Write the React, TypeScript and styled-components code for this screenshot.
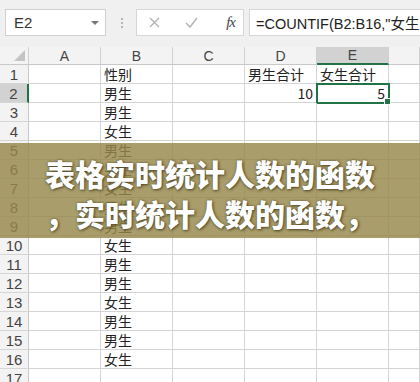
import React from 'react';
import styled, { createGlobalStyle } from 'styled-components';

const GlobalStyle = createGlobalStyle`
  html, body {
    margin: 0;
    padding: 0;
    background: #ffffff;
    font-family: "Noto Sans CJK SC", "Noto Sans", sans-serif;
  }
`;

const Page = styled.div`
  position: relative;
  width: 420px;
  height: 382px;
  overflow: hidden;
  background: #ffffff;
`;

const Toolbar = styled.div`
  display: flex;
  align-items: center;
  height: 47px;
  padding: 0 0 2px 5px;
  box-sizing: border-box;
  background: #f0f0f0;
`;

const NameBox = styled.div`
  display: flex;
  align-items: center;
  justify-content: space-between;
  width: 101px;
  height: 27px;
  box-sizing: border-box;
  padding: 0 6px 0 8px;
  background: #ffffff;
  border: 1px solid #cfcfcf;
  font-family: "Liberation Sans", sans-serif;
  font-size: 15px;
  color: #333;
`;

const Caret = styled.span`
  width: 0;
  height: 0;
  border-left: 4px solid transparent;
  border-right: 4px solid transparent;
  border-top: 4px solid #777;
`;

const Grip = styled.div`
  display: flex;
  flex-direction: column;
  gap: 2px;
  margin: 0 13px 0 15px;
  span {
    width: 2px;
    height: 2px;
    background: #b5b5b5;
  }
`;

const ActionBox = styled.div`
  display: flex;
  align-items: center;
  width: 108px;
  height: 27px;
  box-sizing: border-box;
  padding: 0 8px 0 12px;
  background: #ffffff;
  border: 1px solid #d6d6d6;
  gap: 0;
`;

const ActionIcon = styled.span<{ $w: number }>`
  display: flex;
  align-items: center;
  width: ${p => p.$w}px;
`;

const Fx = styled.span`
  font-family: "Liberation Serif", serif;
  font-style: italic;
  font-size: 15px;
  color: #444;
  margin-left: auto;
  letter-spacing: -1px;
`;

const FormulaBox = styled.div`
  display: flex;
  align-items: center;
  flex: 1;
  height: 27px;
  margin-left: 5px;
  padding-left: 6px;
  box-sizing: border-box;
  background: #ffffff;
  border: 1px solid #d6d6d6;
  border-right: none;
  font-family: "Liberation Sans", "Noto Sans CJK SC", sans-serif;
  font-size: 14.5px;
  color: #222;
  white-space: nowrap;
  overflow: hidden;
`;

const Sheet = styled.div`
  display: grid;
  grid-template-columns: 29px repeat(5, 72px) 1fr;
  grid-auto-rows: 19px;
  grid-template-rows: 18px;
`;

const ColHead = styled.div<{ $active?: boolean }>`
  display: flex;
  align-items: center;
  justify-content: center;
  box-sizing: border-box;
  background: ${p => (p.$active ? '#d2d2d2' : '#f3f3f3')};
  border-right: 1px solid #d0d0d0;
  border-bottom: ${p => (p.$active ? '2px solid #217346' : '1px solid #c8c8c8')};
  font-family: "Liberation Sans", sans-serif;
  font-size: 14px;
  color: #444;
`;

const Corner = styled(ColHead)`
  position: relative;
  &::after {
    content: '';
    position: absolute;
    right: 3px;
    bottom: 3px;
    width: 0;
    height: 0;
    border-left: 11px solid transparent;
    border-bottom: 11px solid #c4c4c4;
  }
`;

const RowHead = styled.div<{ $active?: boolean }>`
  display: flex;
  align-items: center;
  justify-content: center;
  box-sizing: border-box;
  background: ${p => (p.$active ? '#d2d2d2' : '#f3f3f3')};
  border-right: ${p => (p.$active ? '2px solid #217346' : '1px solid #c8c8c8')};
  border-bottom: 1px solid #d6d6d6;
  font-family: "Liberation Sans", sans-serif;
  font-size: 15px;
  color: #444;
`;

const Cell = styled.div<{ $align?: 'left' | 'right'; $selected?: boolean }>`
  position: relative;
  display: flex;
  align-items: center;
  justify-content: ${p => (p.$align === 'right' ? 'flex-end' : 'flex-start')};
  box-sizing: border-box;
  padding: 0 3px;
  border-right: 1px solid #d4d4d4;
  border-bottom: 1px solid #d4d4d4;
  font-size: 14px;
  color: #222;
  white-space: nowrap;
  ${p =>
    p.$selected &&
    `
    outline: 2px solid #217346;
    outline-offset: -1px;
    &::after {
      content: '';
      position: absolute;
      right: -3px;
      bottom: -3px;
      width: 5px;
      height: 5px;
      background: #217346;
      border: 1px solid #fff;
      z-index: 2;
    }
  `}
`;

const Banner = styled.div`
  position: absolute;
  left: 0;
  right: 0;
  top: 143px;
  height: 95px;
  display: flex;
  flex-direction: column;
  align-items: center;
  justify-content: center;
  padding-top: 4px;
  box-sizing: border-box;
  background: rgba(150, 135, 75, 0.82);
  color: #ffffff;
  font-family: "Noto Sans CJK SC", sans-serif;
  font-weight: 900;
  font-size: 30px;
  line-height: 40px;
  text-shadow: 1px 1px 3px rgba(50, 40, 10, 0.7), 0 0 2px rgba(50, 40, 10, 0.5);
  z-index: 3;
`;

const genders = ['男', '男', '女', '男', '男', '女', '男', '男', '女', '男', '男', '女', '男', '男', '女'];
const cols = ['A', 'B', 'C', 'D', 'E'];

type Row = Record<string, { text: string; align?: 'left' | 'right'; selected?: boolean }>;

const rows: Row[] = [];
rows.push({ B: { text: '性别' }, D: { text: '男生合计' }, E: { text: '女生合计' } });
genders.forEach((g, i) => {
  const r: Row = { B: { text: g + '生' } };
  if (i === 0) {
    r.D = { text: '10', align: 'right' };
    r.E = { text: '5', align: 'right', selected: true };
  }
  rows.push(r);
});
rows.push({});

const App: React.FC = () => (
  <Page>
    <GlobalStyle />
    <Toolbar>
      <NameBox>
        E2
        <Caret />
      </NameBox>
      <Grip>
        <span />
        <span />
        <span />
      </Grip>
      <ActionBox>
        <ActionIcon $w={36}>
          <svg width="11" height="11" viewBox="0 0 11 11">
            <path d="M1 1L10 10M10 1L1 10" stroke="#b0b0b0" strokeWidth="1.3" fill="none" />
          </svg>
        </ActionIcon>
        <ActionIcon $w={36}>
          <svg width="13" height="11" viewBox="0 0 13 11">
            <path d="M1 6L5 10L12 1" stroke="#b0b0b0" strokeWidth="1.4" fill="none" />
          </svg>
        </ActionIcon>
        <Fx>fx</Fx>
      </ActionBox>
      <FormulaBox>=COUNTIF(B2:B16,"女生")</FormulaBox>
    </Toolbar>
    <Sheet>
      <Corner />
      {cols.map(c => (
        <ColHead key={c} $active={c === 'E'}>
          {c}
        </ColHead>
      ))}
      <ColHead />
      {rows.map((r, i) => (
        <React.Fragment key={i}>
          <RowHead $active={i === 1}>{i + 1}</RowHead>
          {cols.map(c => (
            <Cell key={c} $align={r[c]?.align} $selected={r[c]?.selected}>
              {r[c]?.text}
            </Cell>
          ))}
          <Cell />
        </React.Fragment>
      ))}
    </Sheet>
    <Banner>
      <div>表格实时统计人数的函数</div>
      <div>，实时统计人数的函数，</div>
    </Banner>
  </Page>
);

export default App;
